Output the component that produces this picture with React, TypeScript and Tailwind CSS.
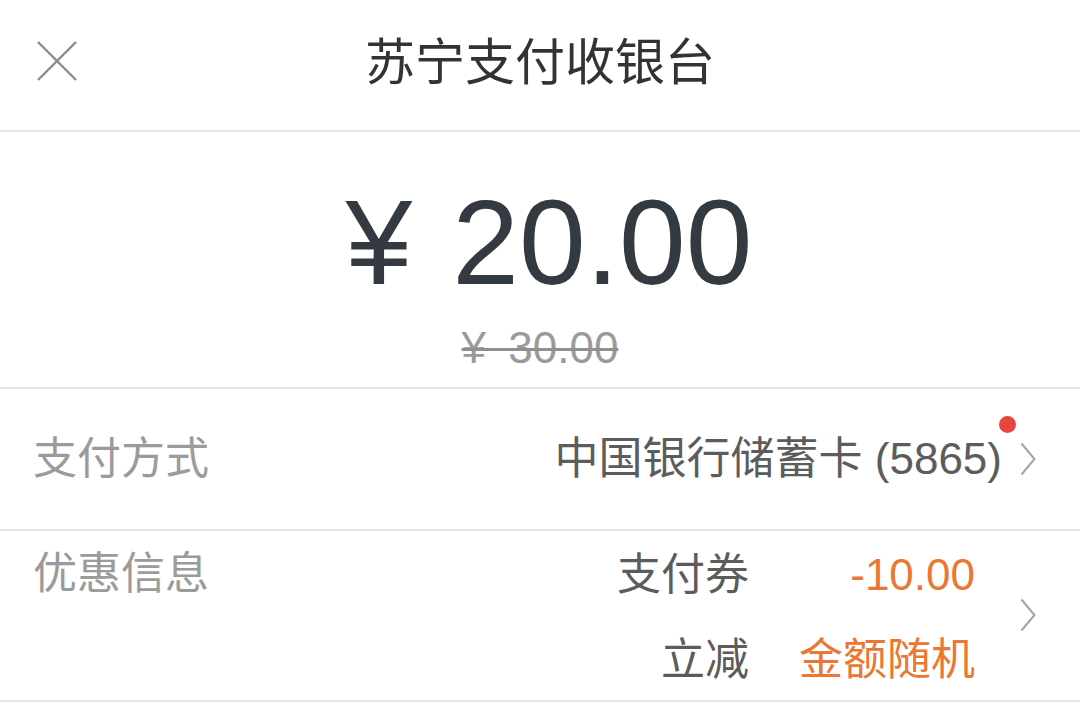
const font = { fontFamily: '"Liberation Sans", "Noto Sans CJK SC", sans-serif' };

function Chevron() {
  return (
    <svg width="16" height="34" viewBox="0 0 16 34" fill="none" className="shrink-0">
      <polyline points="1.5,1.5 14.5,17 1.5,32.5" stroke="#a3a3a3" strokeWidth="2" strokeLinejoin="miter" />
    </svg>
  );
}

function App() {
  return (
    <div className="w-[1080px] h-[703px] bg-white overflow-hidden" style={font}>
      {/* header */}
      <header className="relative h-[132px] flex items-center justify-center border-b-2 border-[#e4e4e4]">
        <button className="absolute left-[36px] top-[40px] text-[#8c8c8c]">
          <svg width="42" height="42" viewBox="0 0 42 42" fill="none">
            <line x1="2" y1="2" x2="40" y2="40" stroke="currentColor" strokeWidth="2.4" />
            <line x1="40" y1="2" x2="2" y2="40" stroke="currentColor" strokeWidth="2.4" />
          </svg>
        </button>
        <h1 className="text-[50px] leading-[50px] text-[#333] -mt-[4px]">苏宁支付收银台</h1>
      </header>

      {/* amount */}
      <section className="h-[257px] flex flex-col items-center border-b-2 border-[#e4e4e4]">
        <div className="mt-[50px] flex items-baseline text-[120px] leading-[120px] text-[#343a41] pl-[18px]">
          <span>¥</span>
          <span className="ml-[40px]">20.00</span>
        </div>
        <div className="mt-[24px] text-[44px] leading-[44px] text-[#9a9a9a]">
          <span className="line-through decoration-[#8f8f8f] decoration-[3px] [word-spacing:10px]">¥ 30.00</span>
        </div>
      </section>

      {/* payment method */}
      <div className="h-[142px] flex items-center pl-[33px] pr-[44px] border-b-2 border-[#e4e4e4] text-[44px] leading-[44px]">
        <span className="text-[#9b9b9b]">支付方式</span>
        <div className="flex-1" />
        <span className="relative text-[#5c5c5c] mr-[18px]">
          中国银行储蓄卡 (5865)
          <span className="absolute -top-[21px] -right-[14px] w-[17px] h-[17px] rounded-full bg-[#e8463c]" />
        </span>
        <Chevron />
      </div>

      {/* discounts */}
      <div className="h-[171px] flex items-start pl-[33px] pr-[44px] border-b-2 border-[#e4e4e4] text-[44px] leading-[44px]">
        <span className="text-[#9b9b9b] mt-[21px]">优惠信息</span>
        <div className="flex-1" />
        <div className="mt-[22px] mr-[45px] grid grid-cols-[auto_auto] gap-x-[50px] gap-y-[41px] text-right">
          <span className="text-[#5c5c5c]">支付券</span>
          <span className="text-[#ea7833]">-10.00</span>
          <span className="text-[#5c5c5c]">立减</span>
          <span className="text-[#ea7833]">金额随机</span>
        </div>
        <div className="self-center -mt-[2px]">
          <Chevron />
        </div>
      </div>
    </div>
  );
}

export default App;
